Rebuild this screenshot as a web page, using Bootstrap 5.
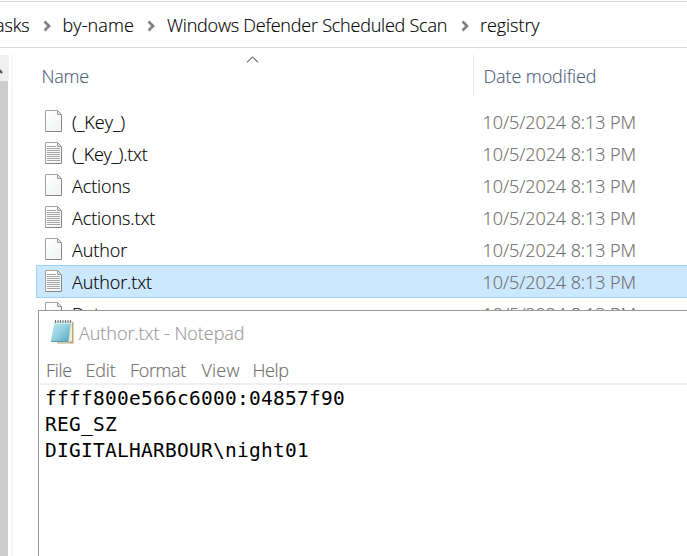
<!DOCTYPE html>
<html lang="en">
<head>
<meta charset="utf-8">
<title>registry</title>
<link href="https://cdn.jsdelivr.net/npm/bootstrap@5.3.0/dist/css/bootstrap.min.css" rel="stylesheet">
<style>
body{font-family:"Open Sans","Noto Sans",sans-serif;font-weight:300;font-size:18px;color:#000;-webkit-text-stroke:.15px currentColor;white-space:nowrap}
.screen{width:687px;height:556px}
.addr{height:48px;padding-top:1px}
.addr-in{height:47px;border-top:1px solid #d9d9d9;border-bottom:1px solid #d9d9d9;line-height:46px}
.addr-in svg{margin-top:18px}
.c1{width:48px;margin-left:-5px;letter-spacing:-.1px}
.c2{width:84.5px;margin-left:11.5px;letter-spacing:.1px}
.c3{width:294px;margin-left:12px;letter-spacing:-.22px}
.c4{margin-left:11px;letter-spacing:-.05px}
.side{width:13px;margin-top:7px}
.sb{width:8px;background:#cdcdcd}
.sb-top{height:26px;width:9px;background:#f0f0f0}
.gap2{width:2px;background:#f7f7f7}
.heads{height:57px;line-height:57px;color:#4c607a}
.h-name{width:460px;padding-left:28.5px;letter-spacing:-.2px}
.sep{width:1px;height:41px;margin-top:7px;background:#e5e5e5}
.h-date{padding-left:9.5px;letter-spacing:-.1px}
.sort{left:246px;top:56px}
.files{margin-left:23px}
.file{height:32px;line-height:34px;padding:0 0 0 9px}
.file svg{margin-top:5px}
.fname{width:420.5px;padding-left:10px;letter-spacing:-.1px}
.key{letter-spacing:0}
.tight{letter-spacing:-.28px}
.fdate{color:#6d6d6d;letter-spacing:-.07px}
.sel{height:33px;line-height:32px;margin-bottom:-1px;background:#cce8ff;border:1px solid #99d1ff;border-right:0;padding-left:8px}
.sel svg{margin-top:4px}
.note{left:38px;top:310px;width:649px;height:246px;border-top:1px solid #9b9b9b;border-left:1px solid #9b9b9b;background:#fff}
.note-title{height:44px;line-height:44px;padding-left:11px;color:#999}
.note-title svg{margin-top:8px}
.note-title span{margin-left:4px;letter-spacing:-.05px}
.note-menu{height:30px;line-height:31px;border-bottom:2px solid #f0f0f0;padding-left:7px;color:#6d6d6d}
.m1{width:39.5px;letter-spacing:-.3px}.m2{width:44.5px;letter-spacing:-.15px}.m3{width:71.5px;letter-spacing:-.35px}.m4{width:51px;letter-spacing:.2px}.m5{letter-spacing:-.38px}
.note-text{font:400 19.5px/26px "DejaVu Sans Mono",monospace;letter-spacing:.26px;padding:1px 0 0 6px;-webkit-text-stroke:0}
</style>
</head>
<body class="m-0 overflow-hidden bg-white">
<svg width="0" height="0" class="position-absolute">
<defs>
<linearGradient id="pg" x2="1" y2="1"><stop stop-color="#fff"/><stop offset="1" stop-color="#f1f3f4"/></linearGradient>
<linearGradient id="nb" x2="1" y2="1"><stop stop-color="#c4e9f1"/><stop offset=".5" stop-color="#93d0df"/><stop offset="1" stop-color="#4fa5bd"/></linearGradient>
<symbol id="page" viewBox="0 0 17 22"><path d="M.5.5h12l4 4v17H.5z" fill="url(#pg)"/><path d="M12.5.5H.5v21" fill="none" stroke="#a3a3a3"/><path d="M.5 21.5h16v-17" fill="none" stroke="#868686"/><path d="M12.5.5v4h4z" fill="#e9e9e9" stroke="#9b9b9b"/></symbol>
<symbol id="lines" viewBox="0 0 17 22"><use href="#page" width="17" height="22"/><path d="M2 4.5h9M2 6.5h13M2 8.500h13M2 10.500h13M2 12.500h13M2 14.500h13M2 16.500h13M2 18.500h13" stroke="#a6a6a6"/></symbol>
<symbol id="chev" viewBox="0 0 9 12"><path d="M1.500 1.500 6 6l-4.500 4.500" fill="none" stroke="#808080" stroke-width="2.700"/></symbol>
</defs>
</svg>
<main class="screen position-relative overflow-hidden d-flex flex-column">
  <nav class="addr"><div class="addr-in d-flex">
    <span class="c1">asks</span><svg width="8" height="12"><use href="#chev" width="9" height="12"/></svg>
    <span class="c2">by-name</span><svg width="8" height="12"><use href="#chev" width="9" height="12"/></svg>
    <span class="c3">Windows Defender Scheduled Scan</span><svg width="8" height="12"><use href="#chev" width="9" height="12"/></svg>
    <span class="c4">registry</span>
  </div></nav>
  <div class="d-flex flex-grow-1">
    <aside class="side d-flex">
      <div class="d-flex flex-column"><div class="sb-top"><svg class="d-block" width="9" height="26"><path d="M-5 18-1.500 14 2 18" fill="none" stroke="#555" stroke-width="2.400"/></svg></div><div class="sb flex-grow-1"></div></div>
      <div class="ms-auto gap2"></div>
    </aside>
    <section class="flex-grow-1">
      <div class="heads d-flex"><div class="h-name">Name</div><div class="sep"></div><div class="h-date">Date modified</div></div>
      <div class="files">
        <div class="file d-flex"><svg width="17" height="22"><use href="#page"/></svg><div class="fname key">(_Key_)</div><div class="fdate">10/5/2024 8:13 PM</div></div>
        <div class="file d-flex"><svg width="17" height="22"><use href="#lines"/></svg><div class="fname key tight">(_Key_).txt</div><div class="fdate">10/5/2024 8:13 PM</div></div>
        <div class="file d-flex"><svg width="17" height="22"><use href="#page"/></svg><div class="fname">Actions</div><div class="fdate">10/5/2024 8:13 PM</div></div>
        <div class="file d-flex"><svg width="17" height="22"><use href="#lines"/></svg><div class="fname">Actions.txt</div><div class="fdate">10/5/2024 8:13 PM</div></div>
        <div class="file d-flex"><svg width="17" height="22"><use href="#page"/></svg><div class="fname">Author</div><div class="fdate">10/5/2024 8:13 PM</div></div>
        <div class="file sel d-flex"><svg width="17" height="22"><use href="#lines"/></svg><div class="fname">Author.txt</div><div class="fdate">10/5/2024 8:13 PM</div></div>
        <div class="file d-flex"><svg width="17" height="22"><use href="#page"/></svg><div class="fname">Date</div><div class="fdate">10/5/2024 8:13 PM</div></div>
      </div>
    </section>
  </div>
  <svg class="sort position-absolute" width="13" height="7"><path d="M1 6.300 6.500.900 12 6.300" fill="none" stroke="#6d6d6d" stroke-width="1.100"/></svg>
  <div class="note position-absolute">
    <div class="note-title d-flex">
      <svg width="25" height="26" viewBox="0 0 25 26"><path d="M5 3h18.500v21.500H7z" fill="#b7a878"/><path d="M5 2h17v20L18 23.500H3z" fill="#f2ecd3"/><path d="M4.500 2.500H21L18.500 22.500H.800z" fill="url(#nb)"/><path d="M4.500 3H21l-.3 2H4.200z" fill="#d8edf2"/><path d="M1 22.500h17.500" stroke="#5b9eae"/><path d="M5.500 1v3M8 1v3M10.500 1v3M13 1v3M15.500 1v3M18 1v3M20.500 1v3" stroke="#777" stroke-width="1.100"/></svg>
      <span>Author.txt - Notepad</span>
    </div>
    <div class="note-menu d-flex"><span class="m1">File</span><span class="m2">Edit</span><span class="m3">Format</span><span class="m4">View</span><span class="m5">Help</span></div>
    <div class="note-text"><div>ffff800e566c6000:04857f90</div><div>REG_SZ</div><div>DIGITALHARBOUR\night01</div></div>
  </div>
</main>
<script src="https://cdn.jsdelivr.net/npm/bootstrap@5.3.0/dist/js/bootstrap.bundle.min.js"></script>
</body>
</html>
